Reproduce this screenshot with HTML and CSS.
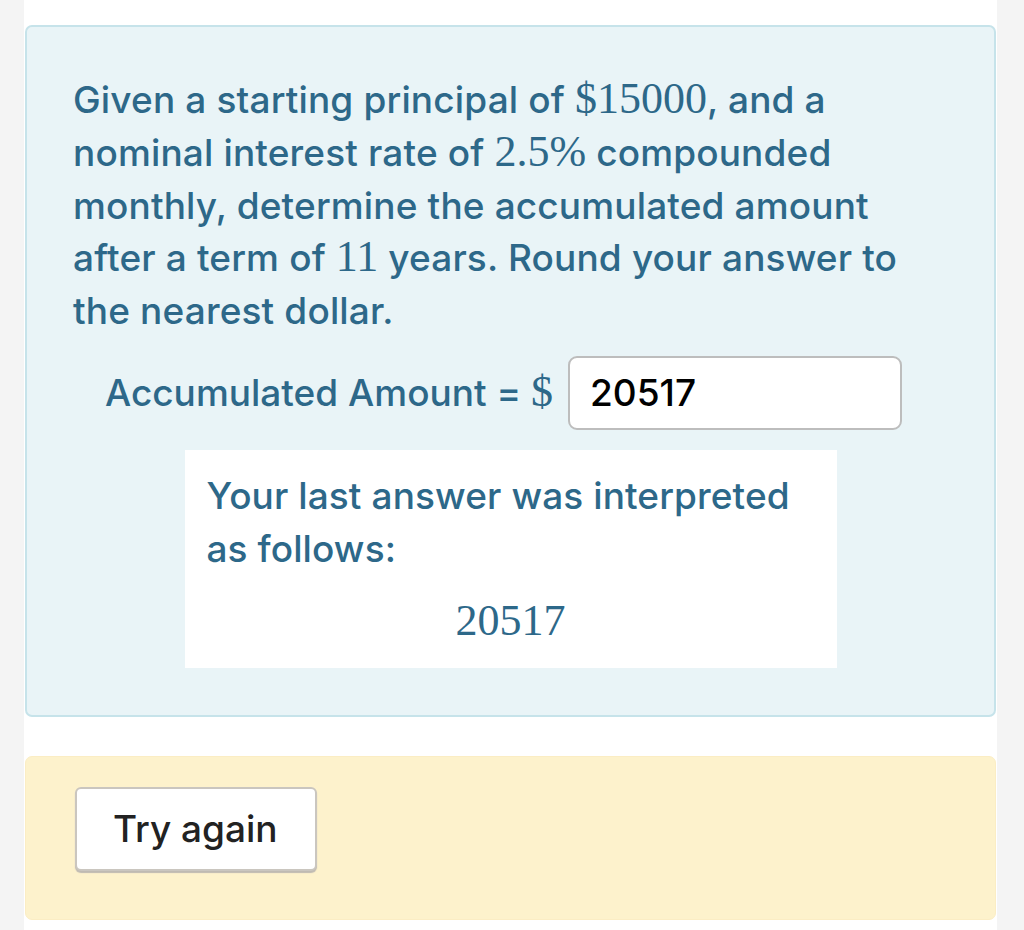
FILE: index.html
```html
<!DOCTYPE html>
<html lang="en">
<head>
    <meta charset="UTF-8">
    <meta name="viewport" content="width=device-width, initial-scale=1.0">
    <title>Question</title>
    <link rel="stylesheet" href="styles.css">
</head>
<body>
    <div class="page">
        <div class="question">
            <p class="prompt">
                Given a starting principal of <span class="math">$15000</span>, and a
                nominal interest rate of <span class="math">2.5%</span> compounded
                monthly, determine the accumulated amount
                after a term of <span class="math">11</span> years. Round your answer to
                the nearest dollar.
            </p>
            <div class="answer-row">
                <label for="amount">Accumulated Amount = <span class="math">$</span></label>
                <input type="text" id="amount" value="20517">
            </div>
            <div class="feedback">
                <p>Your last answer was interpreted as follows:</p>
                <div class="math display">20517</div>
            </div>
        </div>
        <div class="actions">
            <button type="button">Try again</button>
        </div>
    </div>
</body>
</html>
```

FILE: styles.css
```css
body {
    background-color: #f4f4f4;
    font-family: Inter, "Liberation Sans", sans-serif;
    margin: 0;
    padding: 0;
}

.page {
    margin: 0 27px 0 24px;
    padding: 25px 1px 10px;
    min-height: 100vh;
    box-sizing: border-box;
    background-color: white;
}

.question {
    background-color: #e9f4f7;
    border: 2px solid #c6e3ea;
    border-radius: 7px;
    padding: 47px 46px 47px;
    color: #2d6889;
}

.prompt {
    margin: 0;
    font-size: 37px;
    font-weight: 500;
    line-height: 52.8px;
    letter-spacing: 0.15px;
}

.math {
    font-family: "Liberation Serif", serif;
    font-weight: normal;
    font-size: 44px;
    line-height: 1;
    letter-spacing: 0;
}

.answer-row {
    display: flex;
    align-items: center;
    justify-content: center;
    margin-top: 18px;
    padding-right: 14px;
}

.answer-row label {
    font-size: 37px;
    font-weight: 500;
    margin-right: 15px;
}

.answer-row input {
    width: 334px;
    height: 74px;
    box-sizing: border-box;
    border: 2px solid #bdbdbd;
    border-radius: 9px;
    padding: 0 20px;
    font-family: Inter, "Liberation Sans", sans-serif;
    font-size: 37px;
    font-weight: 500;
    color: black;
    background: white;
}

.feedback {
    width: 652px;
    margin: 20px auto 0;
    background-color: white;
    padding: 20px 22px 21px;
    box-sizing: border-box;
}

.feedback p {
    margin: 0;
    font-size: 37px;
    font-weight: 500;
    line-height: 52.8px;
    letter-spacing: 0.1px;
}

.feedback .display {
    text-align: center;
    font-size: 44px;
    line-height: 52px;
    margin-top: 19px;
}

.actions {
    margin-top: 39px;
    background-color: #fdf2cc;
    border: 1px solid #fbedc4;
    border-radius: 7px;
    padding: 30px 49px 48px;
}

.actions button {
    background: white;
    border: 2px solid #cac6bf;
    border-radius: 6px;
    box-shadow: 0 2px 1px #bfbab2;
    padding: 20px 37px 20px 36px;
    font-family: Inter, "Liberation Sans", sans-serif;
    font-size: 37px;
    font-weight: 500;
    line-height: 40px;
    color: #222;
    cursor: pointer;
}
```
